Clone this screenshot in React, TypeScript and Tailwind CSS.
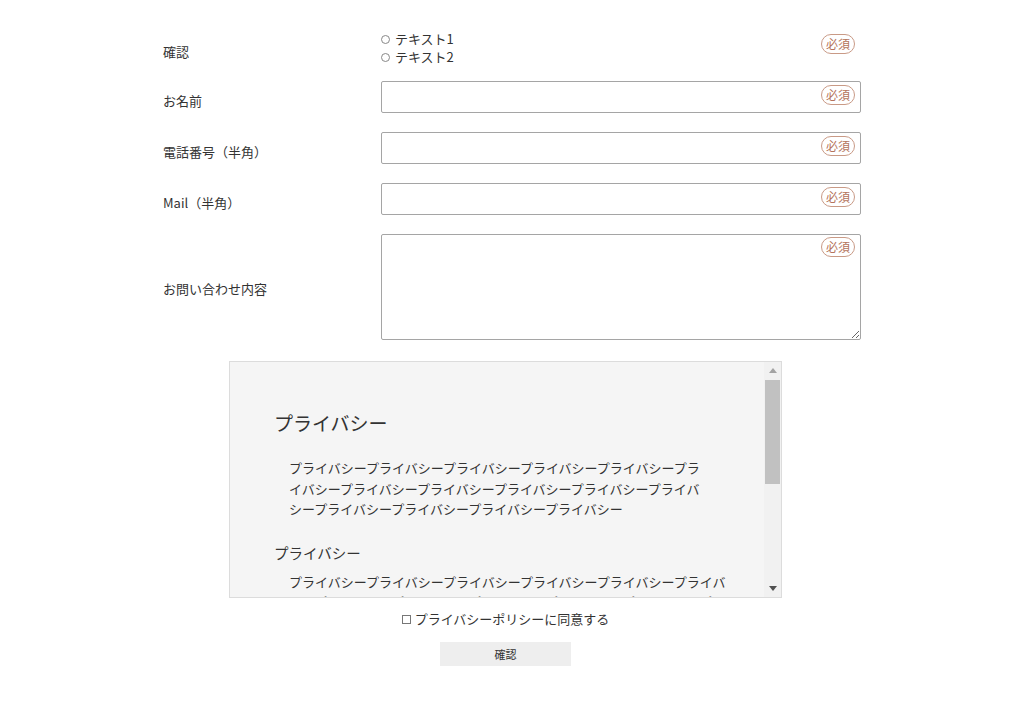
import React from 'react'

const font = { fontFamily: '"Noto Sans CJK JP", "Noto Sans", sans-serif' }

function Badge() {
  return (
    <span className="flex items-center justify-center h-[20px] w-[34px] rounded-full border border-[#c99a86] text-[12px] leading-none text-[#b4735b] bg-white">
      必須
    </span>
  )
}

function Row({ label, children, h, pt }: { label: string; children: React.ReactNode; h: string; pt: string }) {
  return (
    <div className={`flex items-center ${h}`}>
      <div className={`w-[218px] text-[13px] text-[#333] ${pt}`}>{label}</div>
      <div className="w-[480px] h-full relative">{children}</div>
    </div>
  )
}

function TextInput() {
  return (
    <>
      <input className="block w-full h-full border border-[#a5a5a5] rounded-[2px] bg-white outline-none" />
      <div className="absolute right-[6px] top-[4px] flex">
        <Badge />
      </div>
    </>
  )
}

const para = 'プライバシー'.repeat(15)

export default function App() {
  return (
    <div className="min-h-screen bg-white text-[#333]" style={font}>
      <div className="w-[698px] mx-auto pt-[30px] flex flex-col gap-[19px]">
        <div className="flex items-start h-[32px]">
          <div className="w-[218px] text-[13px] pt-[12px]">確認</div>
          <div className="w-[480px] flex items-start justify-between">
            <div className="flex flex-col text-[13px] leading-[18px]">
              <label className="flex items-center gap-[5px]">
                <span className="w-[9px] h-[9px] rounded-full border border-[#888]" />
                テキスト1
              </label>
              <label className="flex items-center gap-[5px]">
                <span className="w-[9px] h-[9px] rounded-full border border-[#888]" />
                テキスト2
              </label>
            </div>
            <div className="mr-[6px] mt-[4px] flex">
              <Badge />
            </div>
          </div>
        </div>
        <Row label="お名前" h="h-[32px]" pt="pt-[8px]">
          <TextInput />
        </Row>
        <Row label="電話番号（半角）" h="h-[32px]" pt="pt-[8px]">
          <TextInput />
        </Row>
        <Row label="Mail（半角）" h="h-[32px]" pt="pt-[8px]">
          <TextInput />
        </Row>
        <Row label="お問い合わせ内容" h="h-[106px]" pt="pt-[3px]">
          <textarea className="block w-full h-full border border-[#a5a5a5] rounded-[2px] bg-white outline-none" />
          <div className="absolute right-[6px] top-[3px] flex">
            <Badge />
          </div>
        </Row>
      </div>

      <div className="w-[1011px] flex flex-col items-center mt-[21px]">
        <div className="w-[553px] h-[237px] flex bg-[#f5f5f5] border border-[#dcdcdc]">
          <div className="flex-1 overflow-hidden">
            <div className="px-[44px] pt-[47px] pb-[40px]">
              <h2 className="text-[19px] leading-[28px] text-[#333]">プライバシー</h2>
              <p className="mt-[21px] pl-[15px] pr-[10px] text-[13px] leading-[20.5px] break-all">{para}</p>
              <h3 className="mt-[22px] text-[14.5px] leading-[22px]">プライバシー</h3>
              <p className="mt-[8px] pl-[15px] w-[462px] text-[13px] leading-[20.5px] break-all">{para}</p>
              <h3 className="mt-[22px] text-[14.5px] leading-[22px]">プライバシー</h3>
              <p className="mt-[8px] pl-[15px] w-[462px] text-[13px] leading-[20.5px] break-all">{para}</p>
            </div>
          </div>
          {/* scrollbar */}
          <div className="w-[17px] h-full bg-[#f1f1f1] flex flex-col items-center">
            <div className="h-[17px] flex items-center justify-center">
              <svg width="8" height="5" viewBox="0 0 8 5">
                <path d="M0 5 L4 0 L8 5 Z" fill="#a3a3a3" />
              </svg>
            </div>
            <div className="mt-[1px] w-[15px] h-[104px] bg-[#c1c1c1]" />
            <div className="flex-1" />
            <div className="h-[17px] flex items-center justify-center">
              <svg width="8" height="5" viewBox="0 0 8 5">
                <path d="M0 0 L8 0 L4 5 Z" fill="#505050" />
              </svg>
            </div>
          </div>
        </div>
        <label className="mt-[12px] flex items-center gap-[4px] text-[13px] leading-[18px]">
          <span className="w-[9px] h-[9px] border border-[#777] bg-white" />
          プライバシーポリシーに同意する
        </label>
        <button className="mt-[14px] w-[131px] h-[24px] bg-[#eeeeee] text-[11px] text-[#333]">確認</button>
      </div>
    </div>
  )
}
